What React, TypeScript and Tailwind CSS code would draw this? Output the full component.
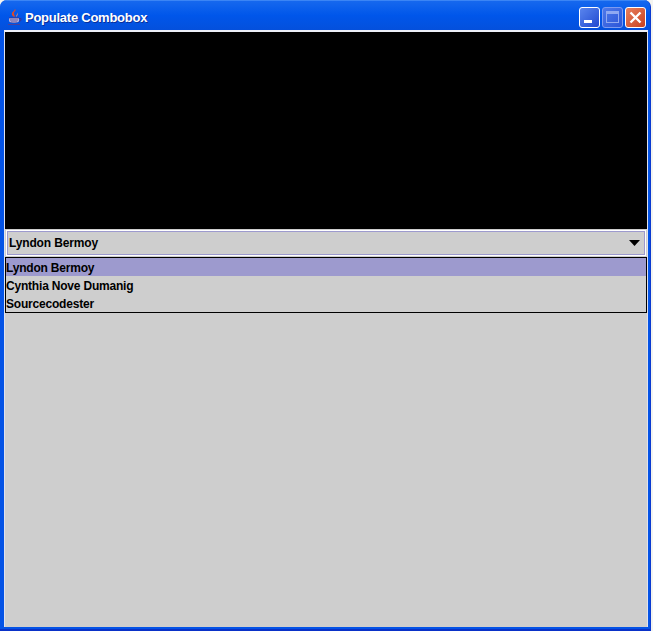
export default function App() {
  const font = { fontFamily: '"Liberation Sans", Arial, sans-serif' };
  return (
    <div className="w-[653px] h-[631px] bg-[#f4f4f0] overflow-hidden pr-[2px]" style={font}>
      <div className="w-[651px] h-[631px] flex flex-col rounded-t-[7px] bg-[#0453e6] overflow-hidden border-b-2 border-r border-b-[#0a32c8] border-r-[#0a3ad0]">
        <div className="h-[30px] shrink-0 flex items-center pt-[3px] pl-[7px] pr-[4px] bg-gradient-to-b from-[#1668ee] via-[#0056ea] to-[#0450dc] border-t border-[#3b85f5]">
          <svg width="15" height="17" viewBox="0 0 15 17" className="shrink-0">
            <path d="M8 0c2 2-2 3-1 5 .5 1 1 2 .5 3C5 7 4.500 5.500 5 4c.5-1.500 2.500-2 3-4z" fill="#e04a28" />
            <path d="M10 3c1 2-1 3-1 5 1.500-1 2.500-3 1-5z" fill="#ee8a68" />
            <path d="M2 9h10v2.500c0 1.500-2 2.500-5 2.500s-5-1-5-2.500z" fill="#dcd8ee" />
            <path d="M2 9h10M2.500 11h9M3.500 13h7" stroke="#3c3290" strokeWidth="1" />
            <path d="M12 9.500h2v2l-2 1" fill="none" stroke="#3c3290" strokeWidth="1" />
            <path d="M1 15.500h12" stroke="#4a3f9a" strokeWidth="1" />
          </svg>
          <span className="ml-[3px] text-white font-bold text-[13px] tracking-[-0.25px] leading-none [text-shadow:1px_1px_0_#0a2f9a]">Populate Combobox</span>
          <div className="ml-auto flex gap-[2px]">
            <div className="w-[21px] h-[21px] rounded-[3px] border border-white bg-gradient-to-br from-[#5a85ee] to-[#2348d0] flex items-end pl-[4px] pb-[4px]">
              <div className="w-[8px] h-[3px] bg-white" />
            </div>
            <div className="w-[21px] h-[21px] rounded-[3px] border border-[#7d9bf0] bg-gradient-to-br from-[#4f79ea] to-[#2c55d8] flex items-center justify-center">
              <div className="w-[13px] h-[12px] border border-[#90a9f2] border-t-[3px]" />
            </div>
            <div className="w-[21px] h-[21px] rounded-[3px] border border-white bg-gradient-to-br from-[#e8805e] to-[#c8401c] flex items-center justify-center">
              <svg width="13" height="13" viewBox="0 0 13 13">
                <path d="M1.500 1.500l10 10M11.500 1.500l-10 10" stroke="#fff" strokeWidth="2.400" />
              </svg>
            </div>
          </div>
        </div>
        <div className="flex-1 ml-[4px] mr-[2px] mb-[2px] bg-[#cecece] flex flex-col border-t-2 border-x border-t-[#eef0f8] border-x-[#dfe2ee] min-h-0">
          <div className="h-[197px] bg-black shrink-0" />
          <div className="h-[26px] shrink-0 mt-px mx-px border border-white bg-[#cecece]">
            <div className="h-full border border-[#9d9ace] flex items-center justify-between pl-px pr-[4px] text-[12px] tracking-[-0.15px] font-bold text-black">
              <span>Lyndon Bermoy</span>
              <svg width="11" height="6" viewBox="0 0 11 6"><path d="M0 0h11L5.500 6z" fill="#000" /></svg>
            </div>
          </div>
          <div className="mt-px border border-black text-[12px] tracking-[-0.2px] font-bold text-black leading-[20px]">
            <div className="h-[18px] bg-[#9d9ace]">Lyndon Bermoy</div>
            <div className="h-[18px]">Cynthia Nove Dumanig</div>
            <div className="h-[18px]">Sourcecodester</div>
          </div>
        </div>
      </div>
    </div>
  );
}
